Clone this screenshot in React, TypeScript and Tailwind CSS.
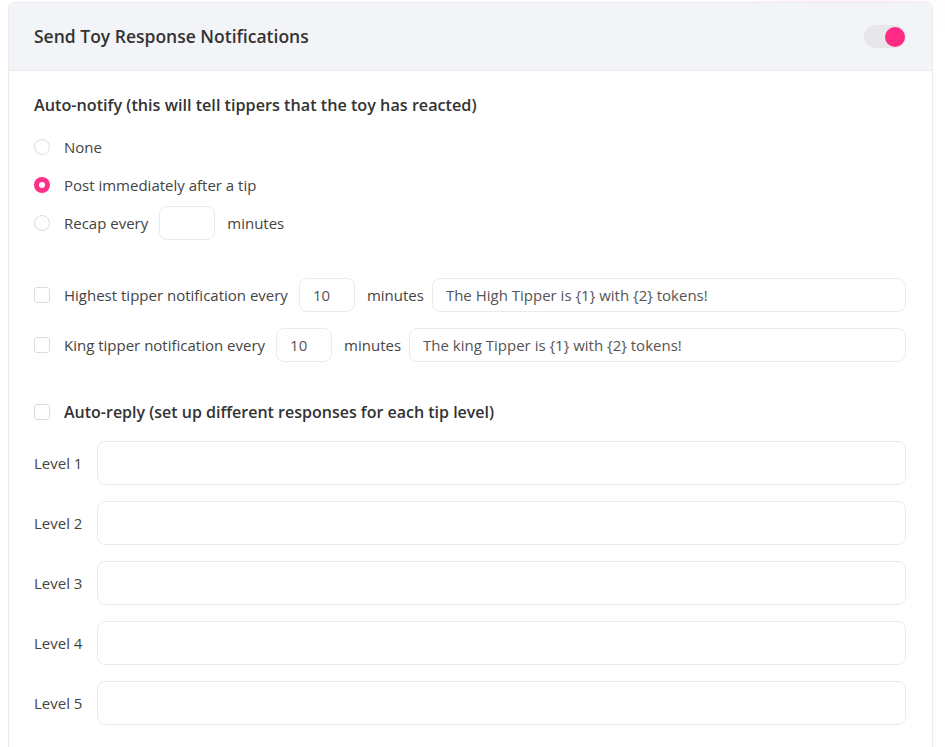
import { useState } from "react";

const Radio = ({ checked }: { checked?: boolean }) =>
  checked ? (
    <span className="flex h-4 w-4 shrink-0 items-center justify-center rounded-full bg-[#ff2d87]">
      <span className="h-[6px] w-[6px] rounded-full bg-white" />
    </span>
  ) : (
    <span className="h-4 w-4 shrink-0 rounded-full border border-[#dcdce0] bg-white" />
  );

const Checkbox = () => (
  <span className="h-4 w-4 shrink-0 rounded-[3px] border border-[#dcdce0] bg-white" />
);

const App = () => {
  const [levels] = useState([1, 2, 3, 4, 5]);

  return (
    <div
      className="relative min-h-screen overflow-hidden bg-white pl-2 pr-3 pt-0.5 text-[15px] text-[#444]"
      style={{ fontFamily: '"Open Sans", "Noto Sans", sans-serif' }}
    >
      {/* pink glow behind the card top */}
      <div className="pointer-events-none absolute -top-5 left-[770px] h-8 w-[150px] rounded-full bg-[#ff2d87] opacity-15 blur-xl" />

      <div className="relative rounded-md border border-[#ebebef] bg-white">
        <div className="flex h-[68px] items-center justify-between rounded-t-md border-b border-[#ebebef] bg-[#f3f4f8] pl-[25px] pr-[26px]">
          <h2 className="text-[17.5px] font-semibold text-[#333]">Send Toy Response Notifications</h2>
          <div className="flex h-[23px] w-[42px] items-center justify-end rounded-full bg-[#e7e7ea] pr-px">
            <span className="h-5 w-5 rounded-full bg-[#ff2a84]" />
          </div>
        </div>

        <div className="pb-10 pl-[25px] pr-[26px] pt-[22px]">
          <p className="text-[16.2px] font-semibold leading-6 text-[#333]">
            Auto-notify (this will tell tippers that the toy has reacted)
          </p>

          <div className="mt-[13px] flex flex-col gap-1">
            <div className="flex h-[34px] items-center gap-[14px]">
              <Radio />
              <span>None</span>
            </div>
            <div className="flex h-[34px] items-center gap-[14px]">
              <Radio checked />
              <span>Post immediately after a tip</span>
            </div>
            <div className="flex h-[34px] items-center">
              <Radio />
              <span className="ml-[14px]">Recap every</span>
              <input className="ml-[11px] h-[34px] w-[56px] rounded-lg border border-[#ebebef] px-3 outline-none" />
              <span className="ml-3">minutes</span>
            </div>
          </div>

          <div className="mt-[38px] flex flex-col gap-4">
            <div className="flex h-[34px] items-center">
              <Checkbox />
              <span className="ml-[14px]">Highest tipper notification every</span>
              <input
                defaultValue="10"
                className="ml-[11px] h-[34px] w-[56px] rounded-lg border border-[#ebebef] px-[13px] text-[#555] outline-none"
              />
              <span className="ml-3">minutes</span>
              <input
                defaultValue="The High Tipper is {1} with {2} tokens!"
                className="ml-[8px] h-[34px] flex-1 rounded-lg border border-[#ebebef] px-[13px] text-[#555] outline-none"
              />
            </div>
            <div className="flex h-[34px] items-center">
              <Checkbox />
              <span className="ml-[14px]">King tipper notification every</span>
              <input
                defaultValue="10"
                className="ml-[11px] h-[34px] w-[56px] rounded-lg border border-[#ebebef] px-[13px] text-[#555] outline-none"
              />
              <span className="ml-3">minutes</span>
              <input
                defaultValue="The king Tipper is {1} with {2} tokens!"
                className="ml-[8px] h-[34px] flex-1 rounded-lg border border-[#ebebef] px-[13px] text-[#555] outline-none"
              />
            </div>
          </div>

          <div className="mt-[38px] flex items-center gap-[14px]">
            <Checkbox />
            <span className="text-base font-semibold leading-6 text-[#333]">
              Auto-reply (set up different responses for each tip level)
            </span>
          </div>

          <div className="mt-[17px] flex flex-col gap-4">
            {levels.map((n) => (
              <div key={n} className="flex items-center">
                <span className="w-[63px] shrink-0 text-[#444]">Level {n}</span>
                <input className="h-11 flex-1 rounded-lg border border-[#ebebef] px-3 outline-none" />
              </div>
            ))}
          </div>
        </div>
      </div>
    </div>
  );
};

export default App;
